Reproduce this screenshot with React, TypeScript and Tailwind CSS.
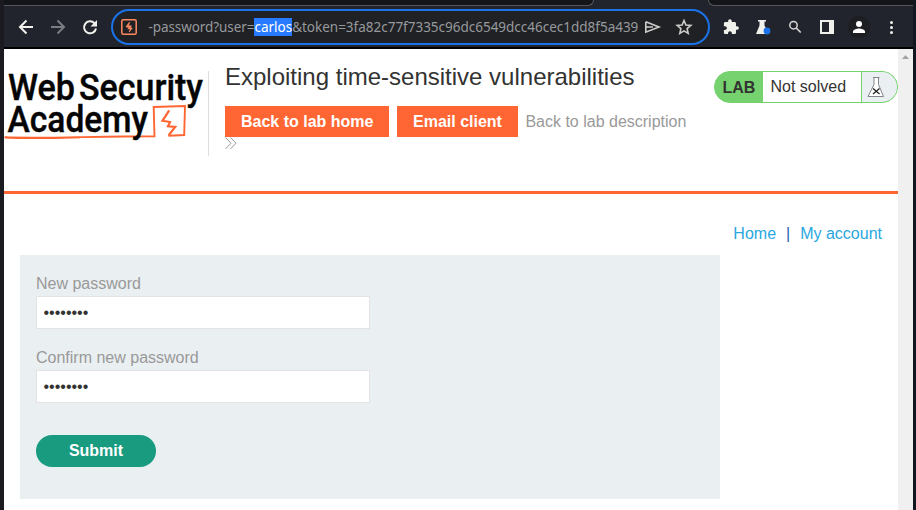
import React from "react";

function Toolbar() {
  return (
    <div className="flex h-[49px] shrink-0 flex-col border-b-2 border-black bg-[#22242d]">
      <div className="flex h-[6px] justify-between">
        <div className="h-[6px] w-[590px] rounded-br-[8px] border-b border-r border-[#55575d] bg-[#141519]" />
        <div className="h-[6px] w-[205px] rounded-bl-[8px] border-b border-l border-[#55575d] bg-[#141519]" />
      </div>
      <div className="flex h-[41px] items-start pt-[3px]">
        <div className="flex h-9 w-[107px] items-center">
          <svg width="107" height="36" viewBox="4 9 107 36" fill="none" strokeWidth="2">
            <path d="M33 27H20M26.5 20.5 20 27l6.500 6.500" stroke="#f1f1ee" />
            <path d="M51 27h13M57.500 20.500 64 27l-6.500 6.500" stroke="#7b7d83" />
            <path d="M94.500 23.200A6 6 0 1 0 96 28.500" stroke="#f1f1ee" />
            <path d="M97 20v6.500h-6.500z" fill="#f1f1ee" />
          </svg>
        </div>
        <div className="flex h-9 w-[599px] items-center rounded-full border-2 border-[#1a73e8] bg-[#202124] pl-2">
          <svg className="shrink-0" width="18" height="18" viewBox="0 0 18 18" fill="none">
            <rect x=".8" y="1.800" width="14.400" height="14.400" rx="1.500" stroke="#ff8a60" strokeWidth="1.500" />
            <path d="M8.600 4 5 8.800 8.300 9.500 6.800 10.800 9.500 11 8.200 14 11.200 10.200 9 9.200 10.500 8 7.500 7.700Z" stroke="#ff8a60" strokeWidth=".7" fill="#ff8a60" />
          </svg>
          <div className="ml-[9.5px] w-[489.5px] shrink-0 whitespace-nowrap font-['Noto_Sans',sans-serif] text-[13.5px] leading-[18px] tracking-[-0.01px] text-[#96999d]">
            <span className="tracking-[-0.08px]">-password?user=</span>
            <span className="bg-[#287bff] text-white">carlos</span>&amp;token=3fa82c77f7335c96dc6549dcc46cec1dd8f5a439
          </div>
          <svg className="ml-[6px] shrink-0" width="52" height="20" viewBox="645 17 52 20" fill="none" stroke="#cdcdcb" strokeWidth="1.600">
            <path d="M646.800 21.800 660 27 646.800 32.200V21.800M646.800 27H654" />
            <path d="M685 20.500l1.900 4.500 4.900.400-3.700 3.200 1.100 4.800-4.200-2.500-4.200 2.500 1.100-4.800-3.700-3.200 4.900-.400z" />
          </svg>
        </div>
        <svg width="203" height="36" viewBox="710 9 203 36" fill="none">
          <path transform="translate(722.500 18.500) scale(.71)" fill="#f0f0ed" d="M20.500 11H19V7c0-1.100-.9-2-2-2h-4V3.500C13 2.120 11.880 1 10.500 1S8 2.120 8 3.500V5H4c-1.100 0-1.990.9-1.990 2v3.800H3.500c1.490 0 2.700 1.210 2.700 2.700s-1.210 2.700-2.700 2.700H2V20c0 1.100.9 2 2 2h3.800v-1.500c0-1.490 1.210-2.700 2.700-2.700s2.700 1.210 2.700 2.700V22H17c1.100 0 2-.9 2-2v-4h1.500c1.380 0 2.500-1.120 2.500-2.500S21.880 11 20.500 11z" />
          <path d="M758 20h8v1.500h-1.500v4L769 34h-13l3.500-8.500v-4H758z" fill="#f0f0ed" />
          <circle cx="767" cy="31" r="3.400" fill="#1a73e8" />
          <circle cx="793.500" cy="25.200" r="3.700" stroke="#d7d7d5" strokeWidth="1.500" />
          <path d="m796.200 28 4.500 4.500" stroke="#d7d7d5" strokeWidth="1.700" />
          <path d="M820 20h14v14h-14zM822 22v10h7V22z" fill="#f0f0ed" fillRule="evenodd" />
          <circle cx="859" cy="27" r="11" fill="#1d1e21" />
          <circle cx="859" cy="24" r="3" fill="#fff" />
          <path d="M853 33v-1.500c0-2 4-3 6-3s6 1 6 3V33z" fill="#fff" />
          <g fill="#f0f0ed"><circle cx="891.500" cy="22.500" r="1.500" /><circle cx="891.500" cy="27.500" r="1.500" /><circle cx="891.500" cy="32.500" r="1.500" /></g>
        </svg>
      </div>
    </div>
  );
}

function Logo() {
  return (
    <svg className="shrink-0 overflow-visible" width="204" height="85" viewBox="4 71 204 85">
      <path d="M4.500 137.300C40 138.700 95 136.300 154.500 136.300L153.700 107 185 106 184.200 135 168.500 135.700" fill="none" stroke="#ff6633" strokeWidth="1.900" />
      <path d="M5 137.500c15 1.300 55 .6 75 0" fill="none" stroke="#ff6633" strokeWidth="1.300" />
      <path d="M169.200 110.300 162.500 120.800 170 122 168 126.300 175.200 127 168.500 135.500" fill="none" stroke="#ff6633" strokeWidth="2.200" />
      <g fill="#050505" stroke="#050505" strokeWidth=".4" fontFamily="Roboto, sans-serif" fontWeight="500" fontSize="37">
        <text x="8" y="99.500" textLength="67" lengthAdjust="spacingAndGlyphs">Web</text>
        <text x="79" y="99.500" textLength="124" lengthAdjust="spacingAndGlyphs">Security</text>
        <text x="7.500" y="132" textLength="140.500" lengthAdjust="spacingAndGlyphs">Academy</text>
      </g>
    </svg>
  );
}

function LabStatus() {
  return (
    <div className="flex h-8 w-[184px] shrink-0 overflow-hidden rounded-[16px] border border-[#75d26f] bg-[#75d26f] text-base leading-[30px] text-[#333332]">
      <div className="w-12 pl-[7.5px] pt-px font-bold">LAB</div>
      <div className="w-[98px] bg-white pl-[7.5px]">Not solved</div>
      <div className="ml-px flex-1 bg-[#eaeff2]">
        <svg width="35" height="30" viewBox="862 72 35 30" fill="none">
          <path d="M873 77.500h6.500M874 78v6.500L868 96.500h15.500L878.500 84.500V78" fill="#fff" stroke="#828487" />
          <path d="m873 88.500 6.500 5.500m0-5.500-6.500 5.500" stroke="#222" strokeWidth="1.300" />
        </svg>
      </div>
    </div>
  );
}

function PasswordField({ label }: { label: string }) {
  return (
    <label className="flex h-[74px] flex-col text-[#999]">
      <span className="h-6 leading-[24px]">{label}</span>
      <input
        type="password"
        defaultValue="password"
        className="h-[33px] w-[334px] border border-[#e3e3e3] bg-white px-[6.5px] text-base leading-4 text-[#333332]"
      />
    </label>
  );
}

export default function App() {
  return (
    <div className="flex h-[510px] w-[916px] flex-col overflow-hidden border-l-4 border-r-[3px] border-l-[#1b1a20] border-r-[#131720] bg-white font-['Liberation_Sans',Arial,sans-serif] text-base text-[#333332]">
      <Toolbar />
      <div className="flex h-[461px]">
        <main className="w-[894px]">
          <header className="flex h-[145px] border-b-[3px] border-[#ff6633] pt-[22px]">
            <Logo />
            <div className="h-[85px] border-l border-[#dedede]" />
            <div className="ml-4 w-[489px] shrink-0">
              <h2 className="-mt-[8px] h-[43px] text-2xl leading-[28px]">Exploiting time-sensitive vulnerabilities</h2>
              <div className="flex h-[31px] items-center whitespace-nowrap leading-[31px]">
                <a className="h-[31px] w-[164px] bg-[#ff6633] pl-4 font-bold text-white">Back to lab home</a>
                <a className="ml-2 h-[31px] w-[121px] bg-[#ff6633] pl-4 font-bold text-white">Email client</a>
                <a className="ml-[7.4px] text-[#999]">Back to lab description</a>
              </div>
              <svg width="13" height="13" viewBox="0 0 13 13" fill="none" stroke="#999">
                <path d="m.5.500 5.500 5.700-5.500 5.700M5.500.500 11 6.200 5.500 11.900" />
              </svg>
            </div>
            <LabStatus />
          </header>
          <nav className="flex h-[61px] items-start justify-end pr-4 pt-[30px] leading-[20px] text-[#29a7df]">
            <a>Home</a>
            <span className="mx-[10px] text-[#2864b5]">|</span>
            <a>My account</a>
          </nav>
          <form className="ml-4 h-[244px] w-[700px] bg-[#eaeff2] px-4 pt-[17px]">
            <PasswordField label="New password" />
            <PasswordField label="Confirm new password" />
            <button type="button" className="mt-[15px] h-8 w-[120px] rounded-full bg-[#199b7f] font-bold leading-8 text-white">Submit</button>
          </form>
        </main>
        <div className="flex w-[15px] justify-center bg-[#f0f0f0] pt-[6px]">
          <svg width="7" height="5" viewBox="0 0 7 5"><path d="M3.500 0 7 4H0z" fill="#a3a3a3" /></svg>
        </div>
      </div>
    </div>
  );
}
